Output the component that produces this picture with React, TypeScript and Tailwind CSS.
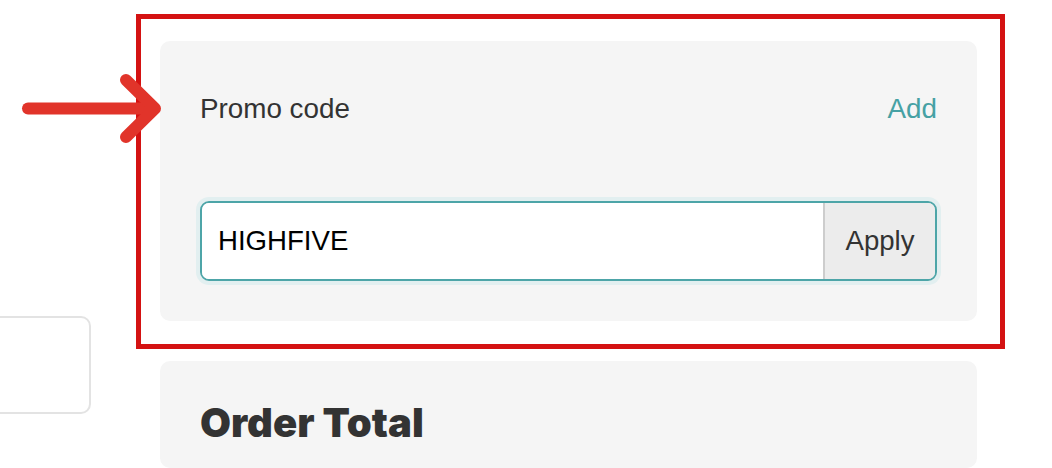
import React from "react";

const sans = { fontFamily: '"Liberation Sans", Arial, sans-serif' };

function Arrow() {
	return (
		<svg
			className="absolute left-0 top-[60px] pointer-events-none"
			width="170"
			height="100"
			viewBox="0 60 170 100"
		>
			<g
				fill="none"
				stroke="#e1342a"
				strokeWidth={12}
				strokeLinecap="round"
				strokeLinejoin="round"
			>
				<path d="M28 108.5 H152" />
				<path d="M126 80 L155 108.5 L126 137" />
			</g>
		</svg>
	);
}

export default function App() {
	return (
		<div
			className="relative w-[1052px] h-[468px] overflow-hidden bg-white flex"
			style={sans}
		>
			{/* left column, cut off by the crop */}
			<div className="w-[136px] shrink-0">
				<div className="ml-[-20px] mt-[316px] w-[111px] h-[98px] rounded-[10px] border-2 border-[#e3e3e3] bg-white" />
			</div>

			<div className="flex flex-col">
				{/* highlighted promo code panel */}
				<div className="mt-[14px] w-[869px] border-[5px] border-[#d41212] pt-[22px] pl-[19px] pr-[23px] pb-[23px]">
					<div className="rounded-[10px] bg-[#f5f5f5] px-[40px] pt-[52px] pb-[40px]">
						<div className="flex items-center justify-between h-[32px] text-[27.8px] leading-[32px]">
							<span className="text-[#333333]">Promo code</span>
							<span className="text-[#46a1a4]">Add</span>
						</div>
						<div className="mt-[76px] flex h-[80px] rounded-[9px] border-2 border-[#4da5a8] ring-4 ring-[#e2eff0] overflow-hidden">
							<input
								className="flex-1 min-w-0 bg-white pl-[16px] text-[27.6px] text-black outline-none"
								style={sans}
								defaultValue="HIGHFIVE"
								readOnly
							/>
							<button className="w-[112px] shrink-0 border-l-2 border-[#cdcdcd] bg-[#ececec] text-[27.6px] text-[#333333]">
								Apply
							</button>
						</div>
					</div>
				</div>

				{/* order total */}
				<div className="mt-[12px] ml-[24px] w-[817px] h-[200px] rounded-[10px] bg-[#f5f5f5] px-[40px] pt-[38px]">
					<h2
						className="text-[40px] leading-[48px] font-black text-[#333333]"
						style={{ fontFamily: "Inter, sans-serif" }}
					>
						Order Total
					</h2>
				</div>
			</div>

			<Arrow />
		</div>
	);
}
